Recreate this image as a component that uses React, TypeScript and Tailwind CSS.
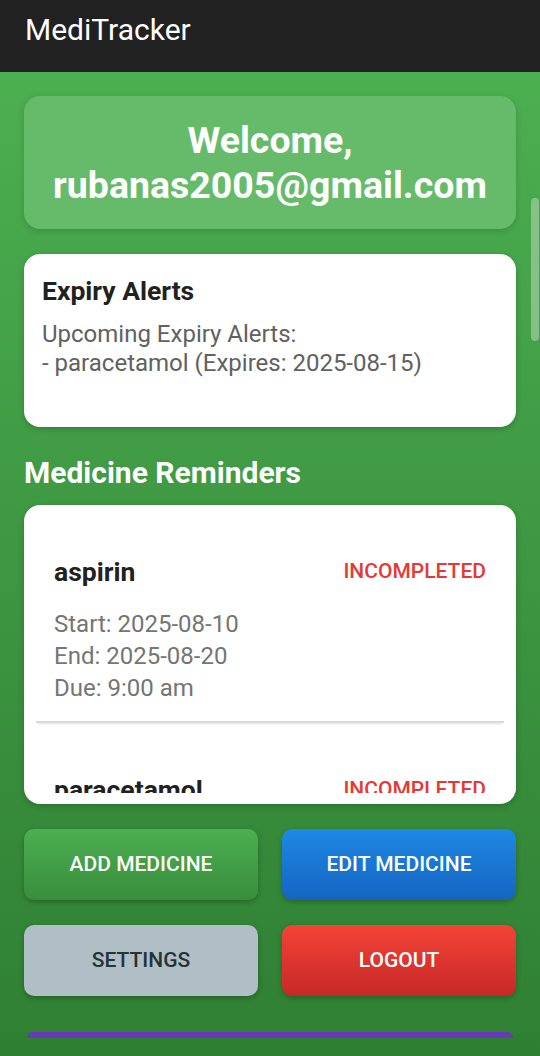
import React from "react";

const items = [
  { name: "aspirin", start: "2025-08-10", end: "2025-08-20", due: "9:00 am" },
  { name: "paracetamol", start: "2025-08-12", end: "2025-08-18", due: "8:00 pm" },
];

export default function App() {
  return (
    <div
      className="relative w-[540px] h-[1056px] overflow-hidden flex flex-col"
      style={{ fontFamily: "Roboto, 'Liberation Sans', sans-serif" }}
    >
      <div className="h-[72px] shrink-0 bg-[#212121] flex items-center px-[25px]">
        <span className="text-white text-[30px] leading-none mt-[-12px]">MediTracker</span>
      </div>
      <div className="flex-1 bg-gradient-to-b from-[#4caf50] to-[#2f7f33] px-6 pt-6 flex flex-col">
        <div className="h-[133px] rounded-[16px] bg-[#66bb6a] shadow-[0_2px_6px_rgba(0,0,0,0.15)] flex flex-col items-center justify-center text-white font-bold text-[37.5px] leading-[45px]">
          <span>Welcome,</span>
          <span>rubanas2005@gmail.com</span>
        </div>
        <div className="mt-[25px] h-[173px] rounded-[16px] bg-white shadow-[0_2px_6px_rgba(0,0,0,0.2)] px-[18px] pt-[22px]">
          <div className="text-[#212121] font-bold text-[26.5px] leading-[30px]">Expiry Alerts</div>
          <div className="mt-[14px] text-[#616161] text-[24px] leading-[29px]">
            <div>Upcoming Expiry Alerts:</div>
            <div>- paracetamol (Expires: 2025-08-15)</div>
          </div>
        </div>
        <div className="mt-[30px] text-white font-bold text-[30px] leading-[32px]">Medicine Reminders</div>
        <div className="mt-[16px] h-[299px] rounded-[16px] bg-white shadow-[0_2px_6px_rgba(0,0,0,0.2)] px-3 pt-3 pb-[11px] flex flex-col">
          <div className="flex-1 overflow-hidden flex flex-col gap-3">
            {items.map((it) => (
              <div
                key={it.name}
                className="shrink-0 px-[18px] pt-[41px] pb-[17px] border-b-2 border-[#dadada] shadow-[0_3px_3px_-2px_rgba(0,0,0,0.12)]"
              >
                <div className="flex items-center justify-between h-[28px]">
                  <span className="text-[#212121] font-bold text-[26.5px]">{it.name}</span>
                  <span className="text-[#e53935] font-medium text-[21px]">INCOMPLETED</span>
                </div>
                <div className="mt-[22px] text-[#757575] text-[24px] leading-[32px]">
                  <div>Start: {it.start}</div>
                  <div>End: {it.end}</div>
                  <div>Due: {it.due}</div>
                </div>
              </div>
            ))}
          </div>
        </div>
        <div className="mt-[25px] grid grid-cols-2 gap-x-6 gap-y-[25px]">
          <button className="h-[71px] rounded-[10px] bg-gradient-to-b from-[#4caf50] to-[#388e3c] shadow-[0_2px_5px_rgba(0,0,0,0.25)] text-white font-medium text-[21px]">
            ADD MEDICINE
          </button>
          <button className="h-[71px] rounded-[10px] bg-gradient-to-b from-[#1e88e5] to-[#1565c0] shadow-[0_2px_5px_rgba(0,0,0,0.25)] text-white font-medium text-[21px]">
            EDIT MEDICINE
          </button>
          <button className="h-[71px] rounded-[10px] bg-[#b0bec5] shadow-[0_2px_5px_rgba(0,0,0,0.25)] text-[#263238] font-medium text-[21px]">
            SETTINGS
          </button>
          <button className="h-[71px] rounded-[10px] bg-gradient-to-b from-[#f44336] to-[#c62828] shadow-[0_2px_5px_rgba(0,0,0,0.25)] text-white font-medium text-[21px]">
            LOGOUT
          </button>
        </div>
        <div className="mt-[36px] mx-[3px] h-[6px] rounded-t-[6px] bg-[#673ab7]" />
      </div>
      <div className="absolute right-[1px] top-[198px] w-[8px] h-[143px] rounded-full bg-[rgba(200,220,200,0.5)]" />
    </div>
  );
}
